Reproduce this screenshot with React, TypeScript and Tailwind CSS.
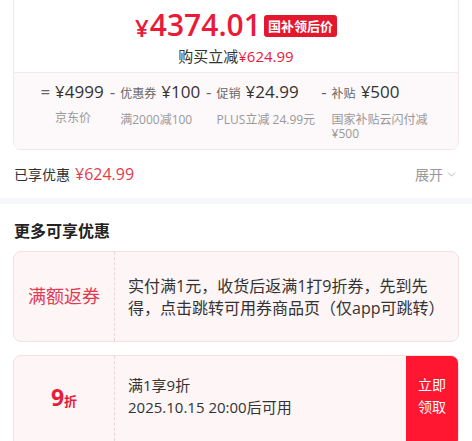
import { ChevronDown } from "lucide-react";

type ItemProps = { op: string; label?: string; value: string; sub: string; subClass?: string };

function Item({ op, label, value, sub, subClass }: ItemProps) {
  return (
    <div className="flex items-start">
      <span className="text-[17px] leading-[24px] text-[#666] mr-[5px]">{op}</span>
      <div className="flex flex-col">
        <div className="leading-[24px] whitespace-nowrap">
          {label && <span className="text-[12px] text-[#666] mr-[5px]">{label}</span>}
          <span className="text-[17px] font-medium text-[#333]">{value}</span>
        </div>
        <div className={"mt-[7px] text-[12px] leading-[14px] text-[#999] " + (subClass ?? "whitespace-nowrap")}>{sub}</div>
      </div>
    </div>
  );
}

export default function App() {
  return (
    <div className="w-[472px] h-[441px] overflow-hidden bg-white text-[#333] font-[family-name:'Open_Sans','Noto_Sans_CJK_SC',sans-serif]">
      <div className="px-[13px]">
        <div className="-mt-[6px] rounded-[8px] border border-[#f2e6e9] overflow-hidden">
          <div className="bg-white pt-[12px] pb-[6px] flex flex-col items-center">
            <div className="flex items-center h-[36px]">
              <span className="text-[#ea1a3a] font-semibold text-[24px] leading-none mt-[6px] mr-[1px]">¥</span>
              <span className="text-[#ea1a3a] font-semibold text-[30px] leading-none">4374.01</span>
              <span className="ml-[3px] mt-[2px] bg-[#e3182f] text-white font-bold text-[13px] leading-[22px] px-[4px] rounded-[3px]">国补领后价</span>
            </div>
            <div className="mt-[3px] text-[15px] leading-[20px] text-[#333]">
              购买立减<span className="text-[#ea1a3a]">¥624.99</span>
            </div>
          </div>
          <div className="border-t border-[#f5e9ec] bg-[#fdf8f9] pt-[7px] pb-[8px] flex justify-center gap-[6px]">
            <Item op="=" value="¥4999" sub="京东价" />
            <Item op="-" label="优惠券" value="¥100" sub="满2000减100" />
            <Item op="-" label="促销" value="¥24.99" sub="PLUS立减 24.99元" />
            <Item op="-" label="补贴" value="¥500" sub="国家补贴云闪付减¥500" subClass="max-w-[100px]" />
          </div>
        </div>
      </div>

      <div className="h-[48px] px-[14px] flex items-center justify-between">
        <div className="flex items-center">
          <span className="text-[14px] text-[#333]">已享优惠</span>
          <span className="ml-[5px] text-[16px] text-[#e53a4e]">¥624.99</span>
        </div>
        <div className="flex items-center text-[14px] text-[#999]">
          <span>展开</span>
          <ChevronDown size={13} strokeWidth={1.5} className="ml-[2px] text-[#aaa]" />
        </div>
      </div>

      <div className="h-[6px] bg-[#f6f7fa]" />

      <div className="px-[14px] pt-[16px] pb-[9px] text-[16px] leading-[22px] font-bold text-[#222]">更多可享优惠</div>

      <div className="px-[13px] flex flex-col gap-[13px]">
        <div className="h-[91px] rounded-[8px] border border-[#f3dfe4] bg-[#fdf5f6] flex overflow-hidden">
          <div className="w-[101px] shrink-0 border-r border-dashed border-[#ebd3d9] flex items-center justify-center">
            <span className="text-[18px] text-[#e23a50]">满额返券</span>
          </div>
          <div className="pl-[13px] flex items-center text-[16px] leading-[22px] text-[#333]">
            <div>
              实付满1元，收货后返满1打9折券，先到先
              <br />
              得，点击跳转可用券商品页（仅app可跳转）
            </div>
          </div>
        </div>

        <div className="h-[92px] shrink-0 rounded-[8px] border border-[#f3dfe4] bg-[#fdf5f6] flex overflow-hidden">
          <div className="w-[101px] shrink-0 border-r border-dashed border-[#ebd3d9] flex justify-center pt-[27px]">
            <div className="flex items-baseline leading-[28px]">
              <span className="text-[23px] font-bold text-[#e61d3a]">9</span>
              <span className="text-[13px] font-bold text-[#e61d3a]">折</span>
            </div>
          </div>
          <div className="flex-1 pl-[13px] pt-[18px] text-[15px] leading-[22px] text-[#333]">
            <div>满1享9折</div>
            <div>2025.10.15 20:00后可用</div>
          </div>
          <div className="w-[52px] shrink-0 bg-[#ff1630] text-white text-[14px] leading-[22px] pt-[18px] flex flex-col items-center">
            <span>立即</span>
            <span>领取</span>
          </div>
        </div>
      </div>
    </div>
  );
}
